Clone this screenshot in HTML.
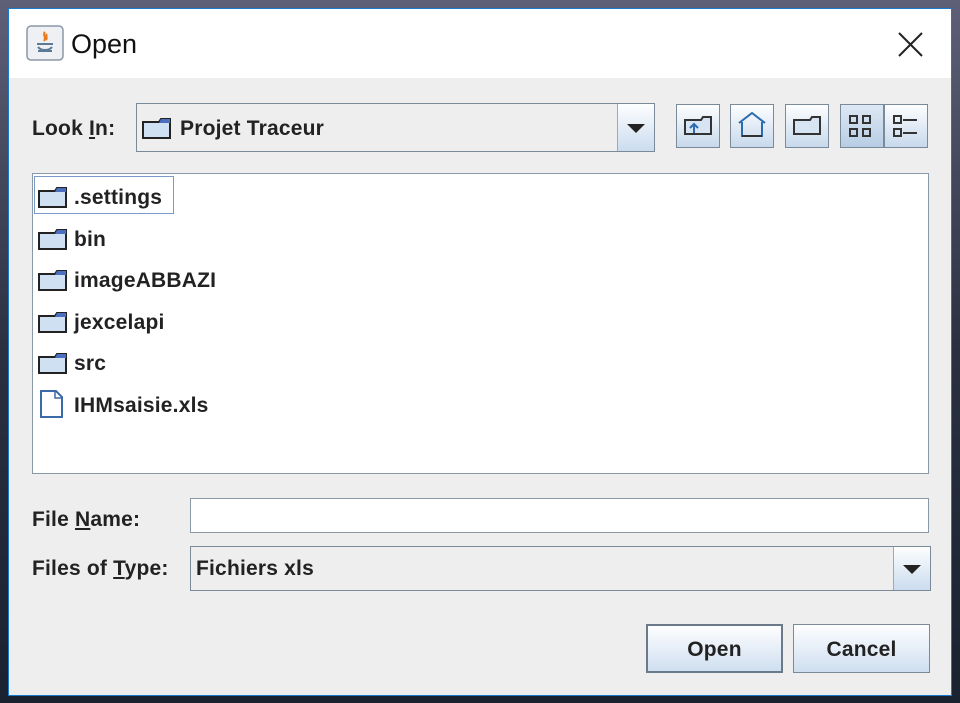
<!DOCTYPE html>
<html><head><meta charset="utf-8"><style>
*{margin:0;padding:0;box-sizing:border-box}
body{width:960px;height:703px;overflow:hidden;background:linear-gradient(#5f6078,#2a3040 50%,#1a2230);font-family:"Liberation Sans",sans-serif;position:relative}
.a{position:absolute}
.win{left:8px;top:8px;width:944px;height:688px;border:1px solid #1979ca;background:#eeeeee}
.title{left:9px;top:9px;width:942px;height:69px;background:#fff}
.b{font-weight:bold;font-size:21px;color:#222;letter-spacing:0.2px}
.combo{border:1px solid #7a8a99;background:#eeeeee}
.arrow{border-left:1px solid #9aaabb;background:linear-gradient(#fdfeff,#cbdcee)}
.tri{width:0;height:0;border-left:9px solid transparent;border-right:9px solid transparent;border-top:9px solid #222;position:absolute;left:50%;top:50%;margin:-4px 0 0 -9px}
.tb{width:44px;height:44px;border:1px solid #7a8a99;background:linear-gradient(#fdfeff,#c8d9ec)}
.btn{border:1px solid #7a8a99;background:linear-gradient(#fefeff,#cfdff0);text-align:center;line-height:46px}
u{text-decoration:underline}
</style></head><body>
<div class="a win"></div>
<div class="a title"></div>
<svg class="a" style="left:26px;top:25px" width="38" height="36" viewBox="0 0 38 36"><rect x="1" y="1" width="36" height="34" rx="4" fill="#eef0f3" stroke="#8a98a8" stroke-width="1.5"/><path d="M19 7c-3 3 2 5-1 9M21 9c-2 2 1 3-1 6" stroke="#e87a20" stroke-width="2" fill="none"/><path d="M11 19h16M12 22c3 4 11 4 14 0M12 26h14" stroke="#5a7a98" stroke-width="2" fill="none"/></svg>
<div class="a" style="left:71px;top:29px;font-size:27px;color:#111">Open</div>
<svg class="a" style="left:898px;top:32px" width="25" height="25"><path d="M1 1L24 24M24 1L1 24" stroke="#222" stroke-width="2"/></svg>

<div class="a b" style="left:32px;top:117px">Look <u>I</u>n:</div>
<div class="a combo" style="left:136px;top:103px;width:519px;height:49px"></div>
<svg class="a" style="left:141px;top:116px" width="32" height="24"><path d="M2 6h16l2-3h9v19H2z" fill="#cfe0f2" stroke="#222" stroke-width="2"/><path d="M20 3h9v4H18z" fill="#4a6fbf"/></svg>
<div class="a b" style="left:180px;top:117px">Projet Traceur</div>
<div class="a arrow" style="left:617px;top:104px;width:37px;height:47px"><div class="tri"></div></div>

<div class="a tb" style="left:676px;top:104px"><svg width="42" height="42"><path d="M8 15h16l2-3h8v17H8z" fill="#d6e4f3" stroke="#333" stroke-width="2"/><path d="M17 28v-8M13 23l4-4 4 4" stroke="#2a6ab0" stroke-width="2" fill="none"/></svg></div>
<div class="a tb" style="left:730px;top:104px"><svg width="42" height="42"><path d="M8 18L21 8 34 18M11 17v14h20V17" fill="none" stroke="#2a6ab0" stroke-width="2"/><path d="M11 31h20" stroke="#333" stroke-width="2"/></svg></div>
<div class="a tb" style="left:785px;top:104px"><svg width="42" height="42"><path d="M8 15h16l2-3h8v17H8z" fill="#d6e4f3" stroke="#333" stroke-width="2"/></svg></div>
<div class="a tb" style="left:840px;top:104px;background:linear-gradient(#dde8f4,#b7cde4)"><svg width="42" height="42" fill="none" stroke="#333" stroke-width="2"><rect x="9" y="11" width="7" height="7"/><rect x="22" y="11" width="7" height="7"/><rect x="9" y="24" width="7" height="7"/><rect x="22" y="24" width="7" height="7"/></svg></div>
<div class="a tb" style="left:884px;top:104px"><svg width="42" height="42" fill="none" stroke="#333" stroke-width="2"><rect x="9" y="11" width="7" height="7"/><rect x="9" y="24" width="7" height="7"/><path d="M18 15h14M18 28h14"/></svg></div>

<div class="a" style="left:32px;top:173px;width:897px;height:301px;background:#fff;border:1px solid #8a99a8"></div>
<div class="a" style="left:34px;top:176px;width:140px;height:38px;border:1px solid #7a9ac8"></div>
<svg width="0" height="0" style="position:absolute"><defs><g id="f"><path d="M2 6h16l2-3h9v19H2z" fill="#cfe0f2" stroke="#222" stroke-width="2"/><path d="M20 3h9v4H18z" fill="#4a6fbf"/></g></defs></svg>
<svg class="a" style="left:37px;top:185px" width="32" height="24"><use href="#f"/></svg>
<div class="a b" style="left:74px;top:186px">.settings</div>
<svg class="a" style="left:37px;top:227px" width="32" height="24"><use href="#f"/></svg>
<div class="a b" style="left:74px;top:228px">bin</div>
<svg class="a" style="left:37px;top:268px" width="32" height="24"><use href="#f"/></svg>
<div class="a b" style="left:74px;top:269px">imageABBAZI</div>
<svg class="a" style="left:37px;top:310px" width="32" height="24"><use href="#f"/></svg>
<div class="a b" style="left:74px;top:311px">jexcelapi</div>
<svg class="a" style="left:37px;top:351px" width="32" height="24"><use href="#f"/></svg>
<div class="a b" style="left:74px;top:352px">src</div>
<svg class="a" style="left:39px;top:389px" width="26" height="30"><path d="M2 2h15l6 6v20H2z" fill="#fff" stroke="#3a6aa8" stroke-width="2"/><path d="M16 2v7h7" fill="none" stroke="#3a6aa8" stroke-width="1.5"/></svg>
<div class="a b" style="left:74px;top:394px">IHMsaisie.xls</div>

<div class="a b" style="left:32px;top:508px">File <u>N</u>ame:</div>
<div class="a" style="left:190px;top:498px;width:739px;height:35px;background:#fff;border:1px solid #8a99a8"></div>
<div class="a b" style="left:32px;top:557px">Files of <u>T</u>ype:</div>
<div class="a combo" style="left:190px;top:546px;width:741px;height:45px"></div>
<div class="a b" style="left:196px;top:557px">Fichiers xls</div>
<div class="a arrow" style="left:893px;top:547px;width:37px;height:43px"><div class="tri"></div></div>

<div class="a btn b" style="left:646px;top:624px;width:137px;height:49px;border:2px solid #6a7a8a;line-height:48px">Open</div>
<div class="a btn b" style="left:793px;top:624px;width:137px;height:49px;line-height:50px">Cancel</div>
</body></html>
